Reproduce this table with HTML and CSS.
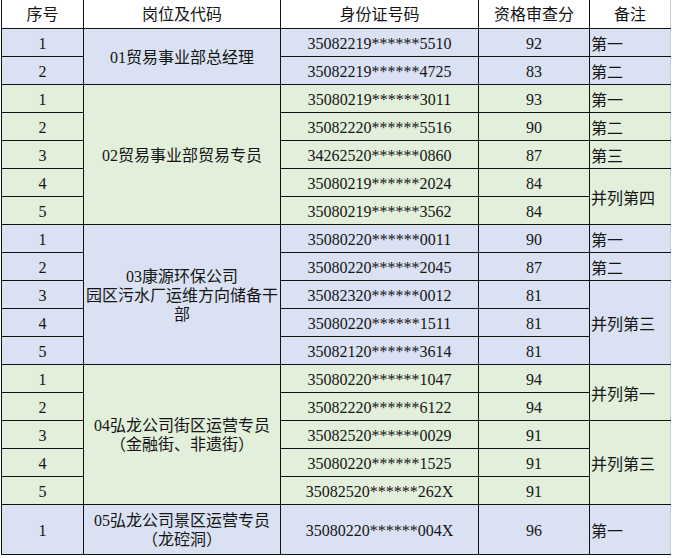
FILE: index.html
```html
<!DOCTYPE html>
<html lang="zh-CN">
<head>
<meta charset="utf-8">
<title>资格审查分</title>
<link rel="stylesheet" href="styles.css">
</head>
<body>
<table class="sheet">
  <colgroup>
    <col class="c-no"><col class="c-post"><col class="c-id"><col class="c-score"><col class="c-note">
  </colgroup>
  <thead>
    <tr class="head">
      <th>序号</th><th>岗位及代码</th><th>身份证号码</th><th>资格审查分</th><th>备注</th>
    </tr>
  </thead>
  <tbody>
    <tr class="blue">
      <td class="num">1</td><td class="post" rowspan="2">01贸易事业部总经理</td><td class="id">35082219******5510</td><td class="num">92</td><td class="note">第一</td>
    </tr>
    <tr class="blue">
      <td class="num">2</td><td class="id">35082219******4725</td><td class="num">83</td><td class="note">第二</td>
    </tr>

    <tr class="green">
      <td class="num">1</td><td class="post" rowspan="5">02贸易事业部贸易专员</td><td class="id">35080219******3011</td><td class="num">93</td><td class="note">第一</td>
    </tr>
    <tr class="green">
      <td class="num">2</td><td class="id">35082220******5516</td><td class="num">90</td><td class="note">第二</td>
    </tr>
    <tr class="green">
      <td class="num">3</td><td class="id">34262520******0860</td><td class="num">87</td><td class="note">第三</td>
    </tr>
    <tr class="green">
      <td class="num">4</td><td class="id">35080219******2024</td><td class="num">84</td><td class="note" rowspan="2">并列第四</td>
    </tr>
    <tr class="green">
      <td class="num">5</td><td class="id">35080219******3562</td><td class="num">84</td>
    </tr>

    <tr class="blue">
      <td class="num">1</td><td class="post" rowspan="5">03康源环保公司<br>园区污水厂运维方向储备干<br>部</td><td class="id">35080220******0011</td><td class="num">90</td><td class="note">第一</td>
    </tr>
    <tr class="blue">
      <td class="num">2</td><td class="id">35080220******2045</td><td class="num">87</td><td class="note">第二</td>
    </tr>
    <tr class="blue">
      <td class="num">3</td><td class="id">35082320******0012</td><td class="num">81</td><td class="note" rowspan="3">并列第三</td>
    </tr>
    <tr class="blue">
      <td class="num">4</td><td class="id">35080220******1511</td><td class="num">81</td>
    </tr>
    <tr class="blue">
      <td class="num">5</td><td class="id">35082120******3614</td><td class="num">81</td>
    </tr>

    <tr class="green">
      <td class="num">1</td><td class="post" rowspan="5">04弘龙公司街区运营专员<br>（金融街、非遗街）</td><td class="id">35080220******1047</td><td class="num">94</td><td class="note" rowspan="2">并列第一</td>
    </tr>
    <tr class="green">
      <td class="num">2</td><td class="id">35082220******6122</td><td class="num">94</td>
    </tr>
    <tr class="green">
      <td class="num">3</td><td class="id">35082520******0029</td><td class="num">91</td><td class="note" rowspan="3">并列第三</td>
    </tr>
    <tr class="green">
      <td class="num">4</td><td class="id">35080220******1525</td><td class="num">91</td>
    </tr>
    <tr class="green">
      <td class="num">5</td><td class="id">35082520******262X</td><td class="num">91</td>
    </tr>

    <tr class="blue tall">
      <td class="num">1</td><td class="post">05弘龙公司景区运营专员<br>（龙硿洞）</td><td class="id">35080220******004X</td><td class="num">96</td><td class="note">第一</td>
    </tr>
  </tbody>
</table>
</body>
</html>
```

FILE: styles.css
```css
html, body {
  margin: 0;
  padding: 0;
  background: #ffffff;
}

body {
  font-family: "Liberation Serif", "Noto Sans CJK SC", serif;
  font-size: 16px;
  color: #151515;
}

.sheet {
  border-collapse: collapse;
  table-layout: fixed;
  width: 669px;
  margin-left: 1px;
}

.c-no { width: 82px; }
.c-post { width: 197px; }
.c-id { width: 198px; }
.c-score { width: 111px; }
.c-note { width: 81px; }

.sheet th,
.sheet td {
  border: 1px solid #111111;
  padding: 2px 1px 0 1px;
  text-align: center;
  vertical-align: middle;
  line-height: 19px;
  white-space: nowrap;
  overflow: hidden;
}

.sheet th {
  font-weight: normal;
  font-family: "Noto Sans CJK SC", sans-serif;
  padding-top: 0;
}

.head {
  height: 28px;
  background: #ffffff;
}

.head th {
  border-top: none;
}

.sheet tr > :last-child {
  border-right-color: #c9ccd4;
}

.sheet tbody tr {
  height: 28px;
}

.sheet tbody tr.tall {
  height: 50px;
}

.blue { background: #d9e1f2; }
.green { background: #e2efda; }

.post {
  font-family: "Liberation Serif", "Noto Sans CJK SC", serif;
}

.note {
  text-align: left;
  padding-left: 2px;
  font-family: "Noto Sans CJK SC", sans-serif;
}

.sheet td.note {
  text-align: left;
}

.id,
.num {
  letter-spacing: 0;
}
```
